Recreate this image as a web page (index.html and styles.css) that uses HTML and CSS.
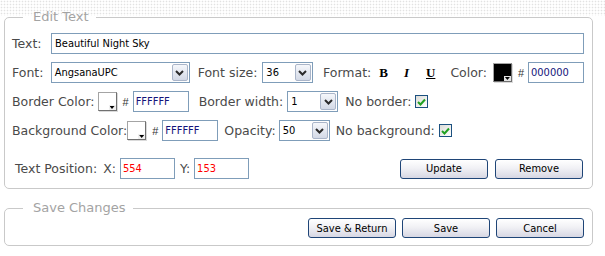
FILE: index.html
```html
<!DOCTYPE html>
<html>
<head>
<meta charset="utf-8">
<title>Edit Text</title>
<link rel="stylesheet" href="styles.css">
</head>
<body>
<form class="page">
  <fieldset class="box box-edit">
    <legend>Edit Text</legend>

    <div class="row">
      <label class="lbl lbl-first">Text:</label>
      <input class="inp inp-grow" type="text" value="Beautiful Night Sky" readonly>
    </div>

    <div class="row">
      <label class="lbl lbl-first">Font:</label>
      <div class="sel sel-font"><span class="sel-val">AngsanaUPC</span><span class="sel-btn"><svg width="9" height="6" viewBox="0 0 9 6"><path d="M1 1 L4.5 4.5 L8 1" fill="none" stroke="#2b2b2b" stroke-width="2"/></svg></span></div>
      <label class="lbl gap-fontsize">Font size:</label>
      <div class="sel sel-small gap-sel"><span class="sel-val">36</span><span class="sel-btn"><svg width="9" height="6" viewBox="0 0 9 6"><path d="M1 1 L4.5 4.5 L8 1" fill="none" stroke="#2b2b2b" stroke-width="2"/></svg></span></div>
      <label class="lbl gap-format">Format:</label>
      <span class="fmt fmt-b">B</span>
      <span class="fmt fmt-i">I</span>
      <span class="fmt fmt-u">U</span>
      <label class="lbl gap-color">Color:</label>
      <span class="sw sw-black gap-sw"></span>
      <span class="hash">#</span>
      <input class="inp inp-hex" type="text" value="000000" readonly>
    </div>

    <div class="row">
      <label class="lbl">Border Color:</label>
      <span class="sw sw-white gap-sw-b"></span>
      <span class="hash">#</span>
      <input class="inp inp-hex" type="text" value="FFFFFF" readonly>
      <label class="lbl gap-bw">Border width:</label>
      <div class="sel sel-small gap-sel-b"><span class="sel-val">1</span><span class="sel-btn"><svg width="9" height="6" viewBox="0 0 9 6"><path d="M1 1 L4.5 4.5 L8 1" fill="none" stroke="#2b2b2b" stroke-width="2"/></svg></span></div>
      <label class="lbl gap-chk-l">No border:</label>
      <span class="chk"><svg width="9" height="8" viewBox="0 0 9 8"><path d="M1 4 L3.5 6.5 L8 1.5" fill="none" stroke="#21a121" stroke-width="2"/></svg></span>
    </div>

    <div class="row row-bg">
      <label class="lbl">Background Color:</label>
      <span class="sw sw-white"></span>
      <span class="hash">#</span>
      <input class="inp inp-hex" type="text" value="FFFFFF" readonly>
      <label class="lbl gap-op">Opacity:</label>
      <div class="sel sel-small gap-sel-c"><span class="sel-val">50</span><span class="sel-btn"><svg width="9" height="6" viewBox="0 0 9 6"><path d="M1 1 L4.5 4.5 L8 1" fill="none" stroke="#2b2b2b" stroke-width="2"/></svg></span></div>
      <label class="lbl gap-chk-l2">No background:</label>
      <span class="chk"><svg width="9" height="8" viewBox="0 0 9 8"><path d="M1 4 L3.5 6.5 L8 1.5" fill="none" stroke="#21a121" stroke-width="2"/></svg></span>
    </div>

    <div class="row row-pos">
      <label class="lbl">Text Position:</label>
      <label class="lbl gap-x">X:</label>
      <input class="inp inp-pos gap-xi" type="text" value="554" readonly>
      <label class="lbl gap-y">Y:</label>
      <input class="inp inp-pos gap-xi" type="text" value="153" readonly>
      <div class="btns btns-row">
        <button class="btn" type="button">Update</button>
        <button class="btn" type="button">Remove</button>
      </div>
    </div>
  </fieldset>

  <fieldset class="box box-save">
    <legend>Save Changes</legend>
    <div class="btns btns-save">
      <button class="btn" type="button">Save &amp; Return</button>
      <button class="btn" type="button">Save</button>
      <button class="btn" type="button">Cancel</button>
    </div>
  </fieldset>
</form>
</body>
</html>
```

FILE: styles.css
```css
* { box-sizing: border-box; }

html, body { margin: 0; padding: 0; }

body {
  width: 605px;
  height: 256px;
  overflow: hidden;
  font-family: "DejaVu Sans", Verdana, sans-serif;
  font-size: 12.5px;
  color: #4a4a4a;
  background:
    linear-gradient(#fff, #fff) 0 16px / 100% 100% no-repeat,
    radial-gradient(circle, #e2e2e2 0.7px, transparent 1.1px) 0 0 / 3px 3px,
    #fff;
}

.page {
  padding: 9px 12px 0 4px;
}

.box {
  margin: 0;
  min-width: 0;
  border: 1px solid #c9c9c9;
  border-radius: 5px;
  background: #fff;
  padding: 8px 8px 9px 7px;
}

.box legend {
  margin-left: 11px;
  padding: 0 7px 0 10px;
  font-size: 13px;
  line-height: 16px;
  color: #a3a3a3;
}

.box-save {
  margin-top: 11px;
  padding: 2px 8px 7px 7px;
}

.row {
  display: flex;
  align-items: center;
  height: 21px;
}

.row + .row { margin-top: 8px; }
.row-pos { margin-top: 17px !important; padding-left: 3px; }

.lbl { white-space: nowrap; line-height: 16px; }
.lbl-first { width: 39px; }

.inp {
  height: 21px;
  border: 1px solid #7f9db9;
  background: #fff;
  margin: 0;
  padding: 0 3px;
  font-family: "DejaVu Sans Condensed", Tahoma, sans-serif;
  font-size: 11px;
  color: #000;
  outline: none;
}

.inp-grow { flex: 1; min-width: 0; }
.inp-hex { width: 56px; padding: 0 2px; color: #14147a; margin-left: 4px; }
.inp-pos { width: 55px; padding: 0 2px; color: #ff0000; }

.sel {
  display: flex;
  height: 21px;
  border: 1px solid #7f9db9;
  background: #fff;
}

.sel-font { width: 140px; }
.sel-small { width: 51px; }

.sel-val {
  flex: 1;
  padding-left: 3px;
  font-family: "DejaVu Sans Condensed", Tahoma, sans-serif;
  font-size: 11px;
  line-height: 19px;
  color: #000;
}

.sel-btn {
  width: 16px;
  margin: 1px;
  border: 1px solid #aab5c9;
  border-radius: 2px;
  background: linear-gradient(#f5f7fb, #d3d9e6);
  display: flex;
  align-items: center;
  justify-content: center;
}

.fmt {
  font-family: "Liberation Serif", serif;
  font-weight: bold;
  font-size: 13px;
  color: #000;
  line-height: 16px;
}
.fmt-b { margin-left: 8px; }
.fmt-i { margin-left: 16px; font-style: italic; }
.fmt-u { margin-left: 17px; text-decoration: underline; }

.gap-fontsize { margin-left: 8px; }
.gap-sel { margin-left: 5px; }
.gap-format { margin-left: 10px; }
.gap-color { margin-left: 15px; }
.gap-sw { margin-left: 6px; }
.gap-sw-b { margin-left: 3px; }
.gap-bw { margin-left: 10px; }
.gap-sel-b { margin-left: 4px; }
.gap-op { margin-left: 6px; }
.gap-sel-c { margin-left: 3px; }
.gap-chk-l { margin-left: 7px; }
.gap-chk-l2 { margin-left: 6px; }
.gap-x { margin-left: 6px; }
.gap-xi { margin-left: 4px; }
.gap-y { margin-left: 5px; }

.sw {
  position: relative;
  width: 19px;
  height: 19px;
  border: 1px solid #a4a4a4;
  border-right-color: #707070;
  border-bottom-color: #707070;
  box-shadow: 1px 1px 0 #dadada;
}
.sw-white { background: #fff; }
.sw-black { background: #000; }

.sw::before {
  content: "";
  position: absolute;
  right: 0;
  bottom: 0;
  width: 7px;
  height: 5px;
  background: #e4e4e4;
}
.sw-white::before { background: #f0f0f0; }

.sw::after {
  content: "";
  position: absolute;
  right: 1px;
  bottom: 1px;
  width: 5px;
  height: 3px;
  clip-path: polygon(0 0, 100% 0, 50% 100%);
  background: #000;
}

.hash {
  margin-left: 6px;
  font-family: "Liberation Sans", Arial, sans-serif;
  font-size: 11px;
  color: #333;
}

.chk {
  margin-left: 4px;
  width: 13px;
  height: 13px;
  border: 1px solid #1c5180;
  background: linear-gradient(135deg, #dcdcd7, #fff);
  display: flex;
  align-items: center;
  justify-content: center;
}

.btns {
  display: flex;
  gap: 6px;
  margin-left: auto;
}
.btns-row { gap: 7px; margin-right: 1px; }

.btns-save { justify-content: flex-end; }

.btn {
  width: 88px;
  height: 20px;
  margin: 0;
  padding: 0;
  border: 1px solid #1f4577;
  border-radius: 3px;
  background: linear-gradient(#ffffff, #f1f1f5 45%, #d7d7e3);
  font-family: "DejaVu Sans Condensed", Tahoma, sans-serif;
  font-size: 11px;
  color: #000;
}
```
